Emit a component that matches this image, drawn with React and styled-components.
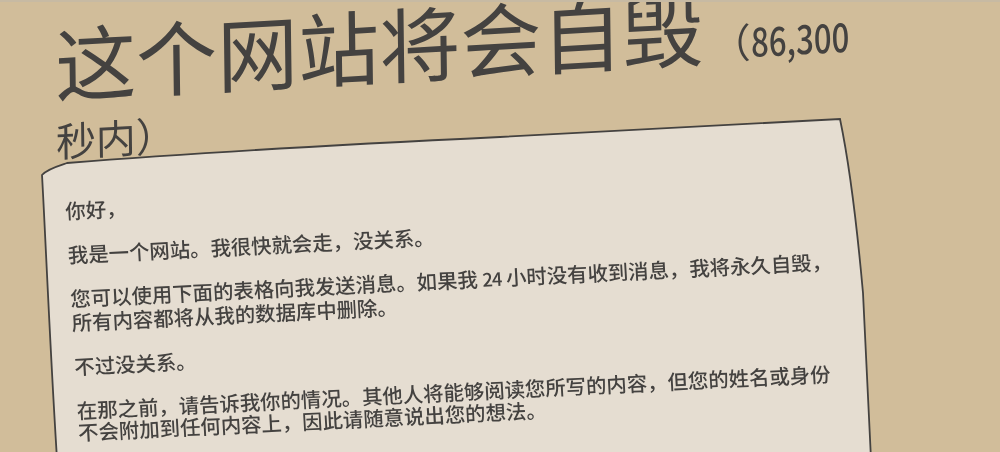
import React from 'react';
import styled, { createGlobalStyle } from 'styled-components';

const GlobalStyle = createGlobalStyle`
  html, body {
    margin: 0;
    padding: 0;
    background: #d1bd9a;
  }
`;

const Page = styled.div`
  height: 452px;
  overflow: hidden;
  box-sizing: border-box;
  border-top: 2px solid #c7baa3;
  background: #d1bd9a;
  color: #444240;
  font-family: "Noto Sans CJK SC", "Noto Sans", sans-serif;
  filter: blur(0.4px);
`;

const Title = styled.h1`
  height: 117px;
  width: 830px;
  margin: 0 0 0 55px;
  padding-top: 36px;
  box-sizing: border-box;
  font-size: 81.2px;
  line-height: 45px;
  font-weight: 400;
  transform: rotate(-3.2deg) skewX(-2.5deg);
  transform-origin: left center;
`;

const Countdown = styled.span`
  font-size: 40px;
  line-height: 40px;
  margin-left: 7px;
`;

const BigDigits = styled.span`
  display: inline-block;
  font-weight: 500;
  transform: scaleX(0.78);
  transform-origin: left center;
  margin-right: -27px;
`;

const SmallDigits = styled.span`
  font-size: 0.9em;
  letter-spacing: -0.05em;
`;

const Paper = styled.section`
  position: relative;
  width: 830px;
  margin-left: 42px;
`;

const PaperShape = styled.svg`
  position: absolute;
  top: 0;
  left: 0;
  overflow: visible;
`;

const Letter = styled.div`
  position: relative;
  width: 770px;
  padding: 81px 0 0 18px;
  font-size: 20.4px;
  line-height: 22.5px;
  font-weight: 500;
  transform: rotate(-2.8deg) skewX(0.5deg);
  transform-origin: left top;
`;

const Line = styled.p`
  margin: 0 0 21.5px;
`;

export default function App() {
  return (
    <Page>
      <GlobalStyle />
      <Title>
        这个网站将会自毁<Countdown>（<BigDigits>86,300</BigDigits> 秒内）</Countdown>
      </Title>
      <Paper>
        <PaperShape width="830" height="340" viewBox="0 0 830 340" aria-hidden="true">
          <path
            d="M0 56 C5 50 16 47 25 44 C125 36 291 26 458 18 L798 0 C808 48 815 107 821 174 L829 340 L15 340 C8 230 3 107 0 56 Z"
            fill="#e5ddd1"
            stroke="#444240"
            strokeWidth="1.8"
          />
        </PaperShape>
        <Letter>
          <Line>你好，</Line>
          <Line>我是一个网站。我很快就会走，没关系。</Line>
          <Line>您可以使用下面的表格向我发送消息。如果我 <SmallDigits>24</SmallDigits> 小时没有收到消息，我将永久自毁，所有内容都将从我的数据库中删除。</Line>
          <Line>不过没关系。</Line>
          <Line>在那之前，请告诉我你的情况。其他人将能够阅读您所写的内容，但您的姓名或身份不会附加到任何内容上，因此请随意说出您的想法。</Line>
        </Letter>
      </Paper>
    </Page>
  );
}
